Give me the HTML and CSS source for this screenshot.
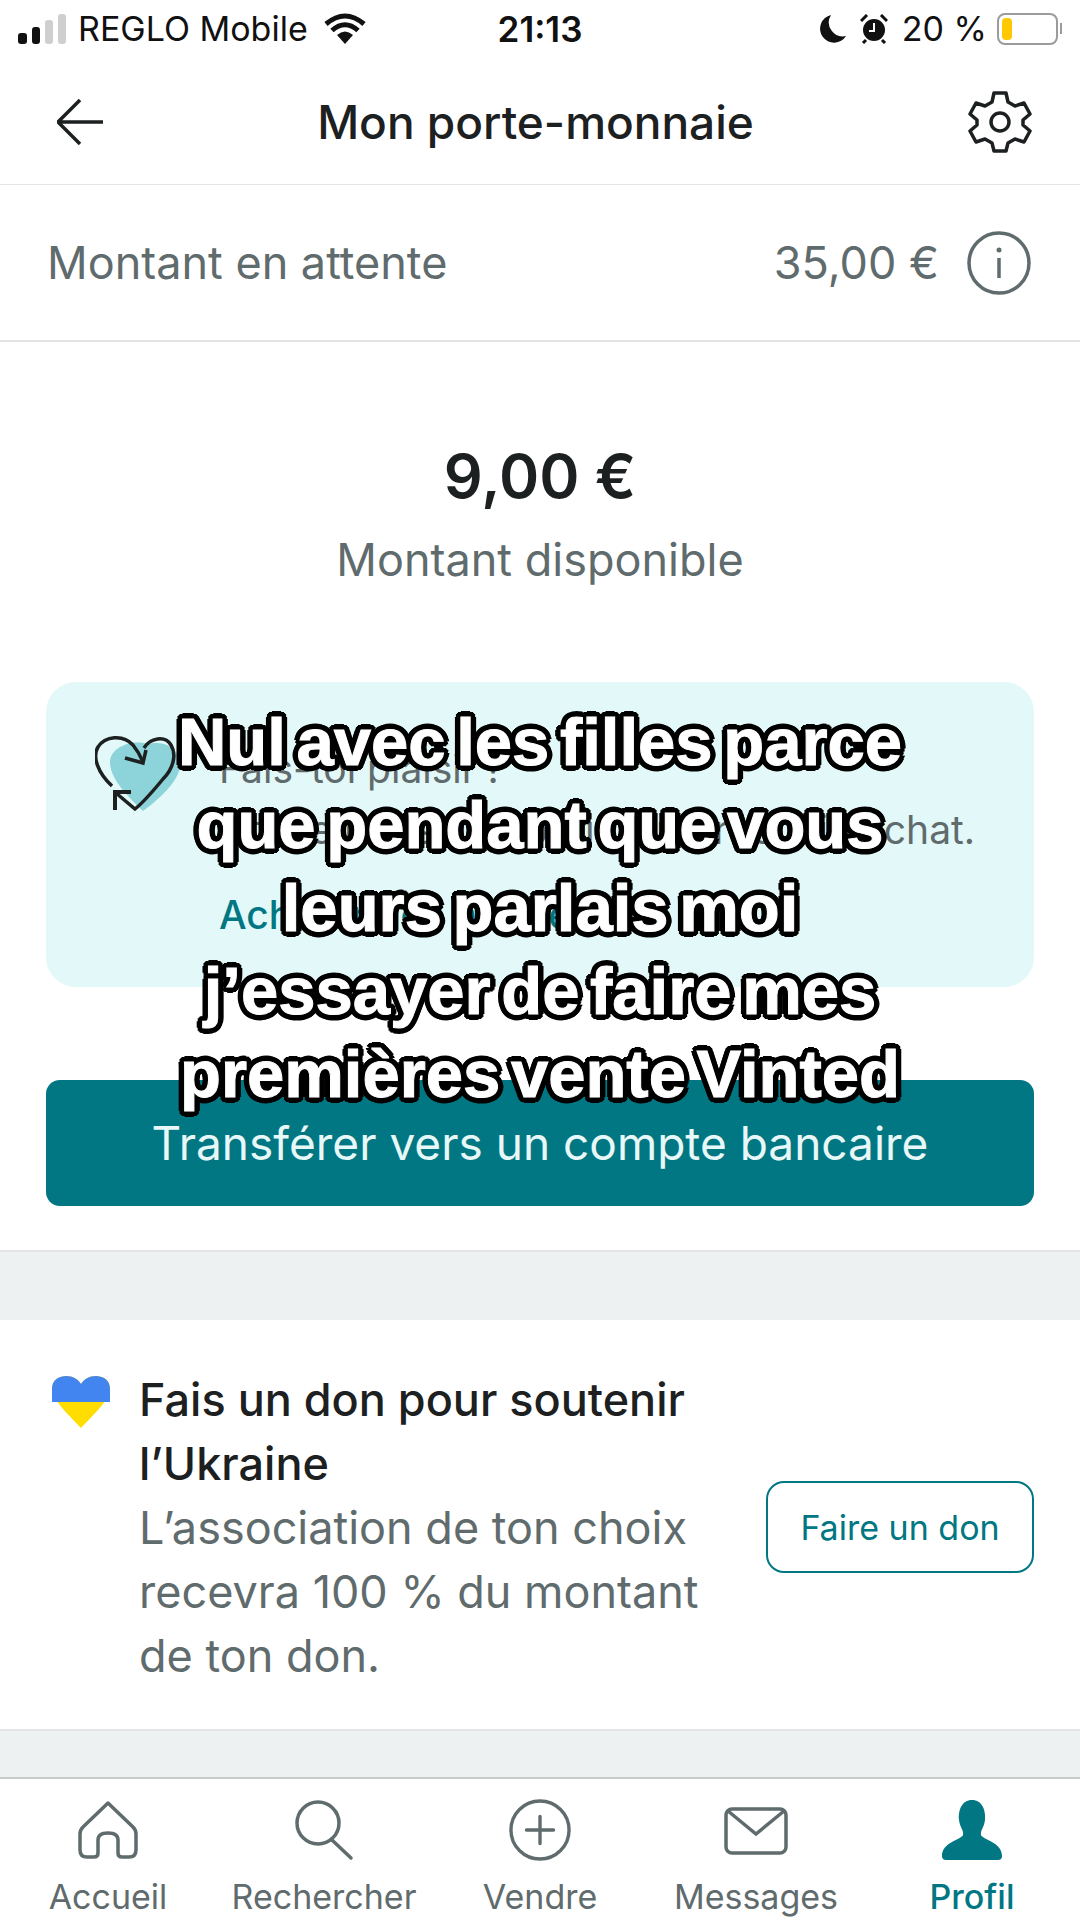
FILE: index.html
```html
<!DOCTYPE html>
<html lang="fr">
<head>
    <meta charset="UTF-8">
    <meta name="viewport" content="width=device-width, initial-scale=1.0">
    <title>Mon porte-monnaie</title>
    <link rel="stylesheet" href="styles.css">
</head>
<body>
    <div class="status-bar">
        <div class="status-left">
            <svg class="signal" width="48" height="32" viewBox="0 0 48 32">
                <rect x="0" y="20" width="9" height="11" rx="3" fill="#111"/>
                <rect x="14" y="14" width="8" height="17" rx="3" fill="#111"/>
                <rect x="27" y="7" width="8" height="24" rx="3" fill="#cfcfcf"/>
                <rect x="40" y="1" width="8" height="30" rx="3" fill="#cfcfcf"/>
            </svg>
            <span>REGLO Mobile</span>
            <svg width="42" height="32" viewBox="0 0 42 32">
                <path d="M2 11 Q21 -5 40 11 M8 17.500 Q21 6 34 17.500" fill="none" stroke="#111" stroke-width="5"/>
                <path d="M13 22 Q21 15 29 22 L21 31 Z" fill="#111"/>
            </svg>
        </div>
        <div class="status-time">21:13</div>
        <div class="status-right">
            <svg width="26" height="28" viewBox="0 0 26 28">
                <path d="M11 0 A14 14 0 1 0 26 21 A14 14 0 0 1 11 0 Z" fill="#111"/>
            </svg>
            <svg class="alarm" width="28" height="30" viewBox="0 0 28 30">
                <circle cx="14" cy="16" r="11" fill="#111"/>
                <path d="M1 7 L7 1 M21 1 L27 7 M6 26 L3 29 M22 26 L25 29" stroke="#111" stroke-width="3"/>
                <path d="M14 9 V17 H9" fill="none" stroke="#fff" stroke-width="2"/>
            </svg>
            <span class="status-pct">20 %</span>
            <div class="battery-wrap">
                <div class="battery"><div class="battery-level"></div></div>
                <div class="battery-cap"></div>
            </div>
        </div>
    </div>

    <div class="top-nav">
        <svg width="46" height="46" viewBox="0 0 46 46">
            <path d="M23 1 L1 23 L23 45 M1 23 H46" fill="none" stroke="#1d2021" stroke-width="3.500"/>
        </svg>
        <h1>Mon porte-monnaie</h1>
        <svg width="64" height="64" viewBox="0 0 64 64">
            <path d="M26 3 H38 L40 12 L47 16 L56 13 L62 24 L55 30 V35 L62 41 L56 52 L47 49 L40 53 L38 61 H26 L24 53 L17 49 L8 52 L2 41 L9 35 V30 L2 24 L8 13 L17 16 L24 12 Z" fill="none" stroke="#1d2021" stroke-width="3.500" stroke-linejoin="round"/>
            <circle cx="32" cy="32" r="9" fill="none" stroke="#1d2021" stroke-width="3.500"/>
        </svg>
    </div>

    <div class="pending-row">
        <span>Montant en attente</span>
        <div class="pending-right">
            <span>35,00 €</span>
            <svg width="64" height="64" viewBox="0 0 64 64">
                <circle cx="32" cy="32" r="30" fill="none" stroke="#5f6b6c" stroke-width="3.500"/>
                <path d="M32 27 V47" stroke="#5f6b6c" stroke-width="3.500"/>
                <circle cx="32" cy="19" r="2.500" fill="#5f6b6c"/>
            </svg>
        </div>
    </div>

    <div class="balance">
        <div class="balance-amount">9,00 €</div>
        <div class="balance-label">Montant disponible</div>
    </div>

    <div class="promo-card">
        <svg class="promo-heart" width="90" height="80" viewBox="0 0 90 80">
            <path d="M52 9 C66 6 84 10 85 30 C85 46 62 66 48 76 C38 66 15 46 15 27 C15 12 38 4 52 9 Z" fill="#8dd4da"/>
            <path d="M17 51 C3 38 -3 22 3 12 C10 1 28 -1 38 10 C42 15 46 22 48 27" fill="none" stroke="#1d2021" stroke-width="3.500"/>
            <path d="M51 15 L48 28 L30 23" fill="none" stroke="#1d2021" stroke-width="3.500"/>
            <path d="M49 13 C55 3 70 0 76 10 C82 20 78 34 68 44 C58 56 50 66 40 74 L21 58" fill="none" stroke="#1d2021" stroke-width="3.500"/>
            <path d="M20 75 V57 L36 57" fill="none" stroke="#1d2021" stroke-width="4"/>
        </svg>
        <div class="promo-text">
            <div class="promo-title">Fais-toi plaisir !</div>
            <div class="promo-desc">Utilise ton solde pour ton prochain achat.</div>
            <div class="promo-link">Acheter des articles</div>
        </div>
    </div>

    <button class="transfer-btn">Transférer vers un compte bancaire</button>

    <div class="section-gap"></div>

    <div class="donate">
        <svg class="donate-heart" width="58" height="52" viewBox="0 0 58 52">
            <path d="M29 52 C18 40 0 24 0 13 C0 3 8 0 14 0 C21 0 26 3 29 8 C32 3 37 0 44 0 C50 0 58 3 58 13 C58 24 40 40 29 52 Z" fill="#ffdd00"/>
            <path d="M0 26 V13 C0 3 8 0 14 0 C21 0 26 3 29 8 C32 3 37 0 44 0 C50 0 58 3 58 13 V26 Z" fill="#4285f0"/>
        </svg>
        <div class="donate-text">
            <div class="donate-title">Fais un don pour soutenir l’Ukraine</div>
            <div class="donate-desc">L’association de ton choix recevra 100 % du montant de ton don.</div>
        </div>
        <button class="donate-btn">Faire un don</button>
    </div>

    <div class="section-fill"></div>

    <div class="tab-bar">
        <div class="tab">
            <svg width="60" height="60" viewBox="0 0 60 60">
                <path d="M30 3 L5 27 Q2 30 2 34 V50 Q2 57 9 57 H16 Q20 57 20 53 V40 Q20 33 30 33 Q40 33 40 40 V53 Q40 57 44 57 H51 Q58 57 58 50 V34 Q58 30 55 27 Z" fill="none" stroke="#5f6b6c" stroke-width="3.500" stroke-linejoin="round"/>
            </svg>
            <span>Accueil</span>
        </div>
        <div class="tab">
            <svg width="60" height="60" viewBox="0 0 60 60">
                <circle cx="24" cy="23" r="21" fill="none" stroke="#5f6b6c" stroke-width="3.500"/>
                <path d="M38 40 L57 58" stroke="#5f6b6c" stroke-width="3.500" stroke-linecap="round"/>
            </svg>
            <span>Rechercher</span>
        </div>
        <div class="tab">
            <svg width="64" height="64" viewBox="0 0 64 64">
                <circle cx="32" cy="32" r="30" fill="none" stroke="#5f6b6c" stroke-width="3.500"/>
                <path d="M32 18 V46 M18 32 H46" stroke="#5f6b6c" stroke-width="3.500" stroke-linecap="round"/>
            </svg>
            <span>Vendre</span>
        </div>
        <div class="tab">
            <svg width="64" height="60" viewBox="0 0 64 60">
                <rect x="2" y="9" width="60" height="44" rx="6" fill="none" stroke="#5f6b6c" stroke-width="3.500"/>
                <path d="M4 11 L32 34 L60 11" fill="none" stroke="#5f6b6c" stroke-width="3.500"/>
            </svg>
            <span>Messages</span>
        </div>
        <div class="tab tab-active">
            <svg width="60" height="60" viewBox="0 0 60 60">
                <path d="M30 0 C40 0 44 10 43 20 C42 28 38 30 39 35 C41 40 60 42 60 56 Q60 60 56 60 H4 Q0 60 0 56 C0 42 19 40 21 35 C22 30 18 28 17 20 C16 10 20 0 30 0 Z" fill="#007782"/>
            </svg>
            <span>Profil</span>
        </div>
    </div>

    <div class="caption">Nul avec les filles parce<br>que pendant que vous<br>leurs parlais moi<br>j’essayer de faire mes<br>premières vente Vinted</div>
</body>
</html>
```

FILE: styles.css
```css
body {
    margin: 0;
    width: 1080px;
    height: 1920px;
    overflow: hidden;
    position: relative;
    display: flex;
    flex-direction: column;
    background: #fff;
    font-family: Inter, 'Liberation Sans', sans-serif;
    color: #1d2021;
}

svg {
    display: block;
    flex-shrink: 0;
}

/* status bar */
.status-bar {
    height: 60px;
    padding: 0 18px 3px;
    box-sizing: border-box;
    display: grid;
    grid-template-columns: 1fr auto 1fr;
    align-items: center;
    font-size: 34px;
    color: #111;
}

.status-left {
    display: flex;
    align-items: center;
    gap: 12px;
}

.status-left span {
    margin-right: 4px;
}

.status-time {
    font-weight: 600;
    font-size: 35px;
}

.status-right {
    display: flex;
    align-items: center;
    justify-content: flex-end;
    gap: 14px;
}

.status-pct {
    margin-right: -4px;
}

.battery-wrap {
    display: flex;
    align-items: center;
    gap: 2px;
}

.battery {
    width: 61px;
    height: 32px;
    box-sizing: border-box;
    border: 2.500px solid #9b9b9b;
    border-radius: 8px;
    padding: 3px;
}

.battery-level {
    width: 10px;
    height: 100%;
    background: #ffc800;
    border-radius: 4px;
}

.battery-cap {
    width: 2px;
    height: 11px;
    background: #9b9b9b;
}

/* top nav */
.top-nav {
    height: 124px;
    padding: 0 48px 0 57px;
    border-bottom: 1px solid #e3e5e5;
    display: flex;
    align-items: center;
    justify-content: space-between;
}

.top-nav h1 {
    margin: 0;
    font-size: 46px;
    font-weight: 500;
}

.pending-row {
    height: 155px;
    padding: 0 49px 0 47px;
    border-bottom: 2px solid #e3e5e5;
    display: flex;
    align-items: center;
    justify-content: space-between;
    font-size: 45px;
    color: #5f6b6c;
}

.pending-right {
    display: flex;
    align-items: center;
    gap: 28px;
}

.balance {
    height: 340px;
    display: flex;
    flex-direction: column;
    align-items: center;
}

.balance-amount {
    margin-top: 97px;
    font-size: 61px;
    font-weight: 600;
}

.balance-label {
    margin-top: 19px;
    font-size: 45px;
    color: #5f6b6c;
}

.promo-card {
    height: 305px;
    margin: 0 46px;
    padding: 53px 30px 0 49px;
    box-sizing: border-box;
    background: #e3f8f8;
    border-radius: 30px;
    display: flex;
    gap: 34px;
}

.promo-title {
    font-size: 39px;
    margin-top: 10px;
    color: #5f6b6c;
}

.promo-desc {
    font-size: 39px;
    margin-top: 14px;
    color: #5f6b6c;
}

.promo-link {
    font-size: 39px;
    margin-top: 38px;
    font-weight: 500;
    color: #007782;
}

.transfer-btn {
    height: 126px;
    margin: 93px 46px 44px;
    background: #007782;
    color: #e8f7f7;
    border: none;
    border-radius: 14px;
    font-family: inherit;
    font-size: 46px;
}

.section-gap {
    height: 68px;
    background: #eef1f2;
    border-top: 2px solid #e3e5e5;
}

.donate {
    height: 409px;
    padding: 48px 46px 0 52px;
    box-sizing: border-box;
    display: flex;
    gap: 29px;
}

.donate-text {
    width: 590px;
    font-size: 45px;
    line-height: 64px;
    flex-shrink: 0;
}

.donate-title {
    font-weight: 500;
}

.donate-desc {
    color: #5f6b6c;
}

.donate-heart {
    margin-top: 8px;
}

.donate-btn {
    width: 268px;
    height: 92px;
    margin: 113px 0 0 auto;
    flex-shrink: 0;
    background: #fff;
    color: #007782;
    border: 2.500px solid #007782;
    border-radius: 18px;
    font-family: inherit;
    font-size: 34px;
}

.section-fill {
    flex: 1;
    background: #eef1f2;
    border-top: 2px solid #e3e5e5;
}

/* bottom tabs */
.tab-bar {
    height: 141px;
    border-top: 2px solid #c8cbcb;
    display: grid;
    grid-template-columns: repeat(5, 1fr);
}

.tab {
    display: flex;
    flex-direction: column;
    align-items: center;
    padding-top: 20px;
    gap: 15px;
    font-size: 34px;
    color: #5f6b6c;
}

.tab svg {
    height: 62px;
}

.tab-active {
    color: #007782;
    font-weight: 500;
}

/* caption that sits on top of the screenshot */
.caption {
    position: absolute;
    top: 700px;
    left: 0;
    width: 1080px;
    text-align: center;
    font-family: 'Liberation Sans', Arial, sans-serif;
    font-weight: 700;
    font-size: 67px;
    line-height: 83px;
    word-spacing: -8px;
    color: #fff;
    -webkit-text-stroke: 1px #fff;
    text-shadow:
        6px 0 0 #000, -6px 0 0 #000, 0 6px 0 #000, 0 -6px 0 #000,
        4px 4px 0 #000, -4px 4px 0 #000, 4px -4px 0 #000, -4px -4px 0 #000,
        5px 3px 0 #000, -5px 3px 0 #000, 5px -3px 0 #000, -5px -3px 0 #000,
        3px 5px 0 #000, -3px 5px 0 #000, 3px -5px 0 #000, -3px -5px 0 #000;
}
```
